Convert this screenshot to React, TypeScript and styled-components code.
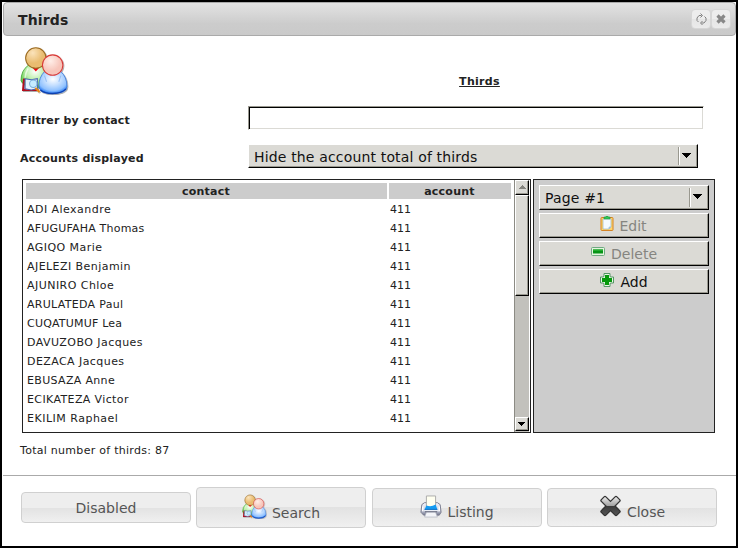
import React from "react";
import styled, { createGlobalStyle, css } from "styled-components";

const GlobalStyle = createGlobalStyle`
  * { box-sizing: border-box; }
  body {
    margin: 0;
    background: #fff;
    color: #222;
    font: 11px "DejaVu Sans", Verdana, sans-serif;
  }
`;

const raised = css`
  border: 1px solid;
  border-color: #fff #000 #000 #fff;
  background: #dbdad5;
  box-shadow: inset -1px -1px 0 #99988f;
`;

const Frame = styled.main`
  width: 738px;
  height: 548px;
  border: 2px solid #000;
  overflow: hidden;
  display: flex;
  flex-direction: column;
`;

const TitleBar = styled.header`
  display: flex;
  align-items: center;
  height: 34px;
  margin-left: 1px;
  padding: 0 4px 0 14px;
  border: 1px solid #aaa;
  border-radius: 4px;
  background: linear-gradient(#e3e3e3, #cccccc 65%, #cacaca);
`;

const Title = styled.h1`
  flex: 1;
  margin: 2px 0 0;
  font-size: 14px;
  line-height: 18px;
  letter-spacing: 0.15px;
`;

const TitleButton = styled.button`
  width: 20px;
  height: 20px;
  padding: 0;
  border: 1px solid #d6d6d6;
  border-radius: 4px;
  background: linear-gradient(#ededed 50%, #e5e5e5 50%, #ebebeb);
  display: grid;
  place-items: center;
`;

const Content = styled.section`
  height: 439px;
  padding: 10px 0 0 18px;
`;

const Heading = styled.div`
  display: grid;
  grid-template-columns: 228px 463px;
  height: 60px;
`;

const PageTitle = styled.h2`
  margin: 29px 0 0;
  font-size: 11px;
  line-height: 14px;
  letter-spacing: 0.3px;
  text-align: center;
  text-decoration: underline;
`;

const Field = styled.label<{ $height: number }>`
  display: grid;
  grid-template-columns: 228px 1fr;
  align-items: start;
  height: ${(p) => p.$height}px;
`;

const FieldName = styled.span<{ $tracking: number }>`
  padding-top: 8px;
  font-weight: bold;
  line-height: 14px;
  letter-spacing: ${(p) => p.$tracking}px;
`;

const TextInput = styled.input`
  width: 456px;
  height: 24px;
  border: 1px solid;
  border-color: #99988f #fff #fff #99988f;
  box-shadow: inset 1px 1px 0 #000, inset -1px -1px 0 #dbdad5;
  background: #fff;
  outline: none;
`;

const SelectBox = styled.div<{ $width: number; $height: number }>`
  ${raised}
  display: flex;
  width: ${(p) => p.$width}px;
  height: ${(p) => p.$height}px;
  padding: 2px 2px 2px 5px;
  color: #111;
  font-size: 14px;
  line-height: ${(p) => p.$height - 3}px;
  letter-spacing: 0.16px;
  white-space: nowrap;
`;

const SelectText = styled.span<{ $top: number }>`
  flex: 1;
  margin-top: ${(p) => p.$top}px;
`;

const SelectArrow = styled.span`
  width: 17px;
  border-left: 1px solid #99988f;
  box-shadow: inset 1px 0 0 #fff;
  padding: 6px 0 0 3px;
  line-height: 0;
`;

const Panels = styled.div`
  display: flex;
  gap: 2px;
  margin: -3px 0 0 2px;
`;

const ListPanel = styled.div`
  display: flex;
  width: 509px;
  height: 254px;
  border: 1px solid #222;
  overflow: hidden;
`;

const Table = styled.div`
  flex: 1;
  padding: 3px 3px 0;
`;

const Row = styled.div`
  display: grid;
  grid-template-columns: 361px 122px;
  gap: 2px;
  height: 17px;
  margin-bottom: 2px;
  line-height: 17px;
  padding-top: 1px;
`;

const HeadRow = styled(Row)`
  height: 15px;
  padding: 0;
`;

const HeadCell = styled.div`
  background: #ccc;
  font-weight: bold;
  line-height: 15px;
  letter-spacing: 0.25px;
  padding: 1px 1px 0 0;
  text-align: center;
`;

const Cell = styled.div<{ $tracking?: number }>`
  padding-left: 1px;
  letter-spacing: ${(p) => p.$tracking ?? 0}px;
  white-space: nowrap;
`;

const ScrollBar = styled.div`
  display: flex;
  flex-direction: column;
  width: 15px;
  margin-right: 1px;
  height: 252px;
  border-left: 1px solid #8c8b84;
  background: #c2c1bc;
  padding-bottom: 1px;
`;

const ScrollPart = styled.div<{ $height: number; $last?: boolean }>`
  ${raised}
  height: ${(p) => p.$height}px;
  margin-top: ${(p) => (p.$last ? "auto" : "0")};
  display: grid;
  place-items: center;
  line-height: 0;
`;

const ActionPanel = styled.div`
  width: 182px;
  height: 254px;
  padding: 5px;
  border: 1px solid #222;
  background: #ccc;
  display: flex;
  flex-direction: column;
  gap: 3px;
`;

const ActionButton = styled.button`
  ${raised}
  display: flex;
  justify-content: center;
  width: 170px;
  height: 25px;
  padding: 0 1px 0 0;
  color: #111;
  font: 14px/25px "DejaVu Sans", Verdana, sans-serif;
  gap: 5px;
  &:disabled { color: #858580; }
  svg { margin-top: 2px; }
`;

const Total = styled.p`
  margin: 11px 0 0;
  line-height: 14px;
  letter-spacing: 0.28px;
`;

const Footer = styled.footer`
  display: flex;
  align-items: flex-start;
  margin-left: 1px;
  padding: 11px 0 0 18px;
  border-top: 1px solid #aaa;
  gap: 5px;
`;

const FooterButton = styled.button<{ $height: number; $top: number; $text: number; $shift?: number }>`
  display: flex;
  justify-content: center;
  width: 170px;
  height: ${(p) => p.$height}px;
  margin: ${(p) => p.$top}px 0 0 ${(p) => p.$shift ?? 0}px;
  padding: 0;
  border: 1px solid #d0d0d0;
  border-radius: 4px;
  background: linear-gradient(#eeeeee 0 50%, #e2e2e2 50%, #f0f0f0);
  color: #555;
  font: 14px/18px "DejaVu Sans", Verdana, sans-serif;
  gap: 5px;
  span { margin-top: ${(p) => p.$text}px; }
  svg { margin-top: 6px; }
`;

const Arrow = ({ up = false }: { up?: boolean }) => (
  <svg width="9" height="6" viewBox="0 0 9 6" shapeRendering="crispEdges">
    {up ? <path d="M4 0h1v1h1v1h1v1h1v1H1V3h1V2h1V1h1z" fill="#85847e" /> : <path d="M0 0h9v1H8v1H7v1H6v1H5v1H4V4H3V3H2V2H1V1H0z" fill="#000" />}
  </svg>
);

const SmallArrow = () => (
  <svg width="8" height="4" viewBox="0 0 8 4" shapeRendering="crispEdges">
    <path d="M0 0h7v1H6v1H5v1H4v1H3V3H2V2H1V1H0z" fill="#000" />
  </svg>
);

const People = ({ size, id }: { size: number; id: string }) => (
  <svg width={size} height={size} viewBox="0 -1 48 48">
    <defs>
      <radialGradient id={id + "tan"} cx=".35" cy=".25"><stop stopColor="#fbe3bb" /><stop offset="1" stopColor="#e9bc70" /></radialGradient>
      <radialGradient id={id + "pink"} cx=".4" cy=".3"><stop stopColor="#ffeee8" /><stop offset="1" stopColor="#f7c5ba" /></radialGradient>
      <radialGradient id={id + "green"} cx=".55" cy=".3" r=".7"><stop stopColor="#ffffff" /><stop offset=".5" stopColor="#bdf0ad" /><stop offset="1" stopColor="#4fc236" /></radialGradient>
      <radialGradient id={id + "blue"} cx=".5" cy=".35" r=".65"><stop stopColor="#ffffff" /><stop offset=".45" stopColor="#c3deff" /><stop offset=".8" stopColor="#8fc1ff" /><stop offset="1" stopColor="#2b7df5" /></radialGradient>
      <filter id={id + "shade"} x="-20%" y="-20%" width="150%" height="150%"><feDropShadow dx=".8" dy=".8" stdDeviation=".6" floodOpacity=".4" /></filter>
    </defs>
    <g filter={`url(#${id}shade)`}>
      <path d="M8 18Q1 23 1 33q2 5 10 6l15 1V20l-5-3z" fill={`url(#${id}green)`} stroke="#3fa532" strokeWidth=".8" />
      <path d="M8 21q-3 5-3 9" fill="none" stroke="#fff" strokeWidth="1.5" opacity=".6" />
      <path d="M12 20h7l-3.5 4z" fill="#f60012" />
      <circle cx="15.5" cy="10.8" r="10" fill={`url(#${id}tan)`} stroke="#9b6a20" />
      <path d="M4 31l-1 11h15" fill="none" stroke="#b30c1c" strokeWidth="2" />
      <path d="M5 31l6 1 6-1v10l-6 1-6-1z" fill="#e2f2fd" stroke="#4a63ae" />
      <circle cx="13" cy="36" r="3.6" fill="#c6ecff" stroke="#7ab0dc" />
      <path d="M15 40l4 4" stroke="#e78712" strokeWidth="2" />
    </g>
    <g filter={`url(#${id}shade)`}>
      <path d="M24 24q-5.500 6-5.500 14 0 7.500 13.500 7.500 14 0 14-7 0-9-6-14.500z" fill={`url(#${id}blue)`} stroke="#3c7ad8" strokeWidth=".8" />
      <path d="M20 42q4 3.500 12 3.500 9 0 13-4.500" fill="none" stroke="#0d3fae" strokeWidth="1.300" />
      <path d="M24 28l2 6m14-6-2 6" fill="none" stroke="#80b1f2" strokeWidth="1" opacity=".7" />
      <circle cx="32" cy="17.700" r="10" fill={`url(#${id}pink)`} stroke="#d93a38" />
    </g>
  </svg>
);

const ClipboardIcon = () => (
  <svg width="14" height="16" viewBox="0 0 14 16">
    <rect x="1" y="1.5" width="12" height="13" rx=".7" fill="#ffd46c" stroke="#d48325" />
    <path d="M3 3h8v8l-2 2H3z" fill="#f4faff" stroke="#8aa7bd" strokeWidth=".6" />
    <path d="M9 13v-2h2" fill="#b9d8f0" stroke="#78a9ca" strokeWidth=".5" />
    <path d="M4 1h2V0h2v1h2v2H4z" fill="#34c759" stroke="#168d37" strokeWidth=".5" />
  </svg>
);

const MinusIcon = () => (
  <svg width="16" height="16" viewBox="0 0 16 16">
    <rect x="1.5" y="3.5" width="13" height="8" rx="1" fill="#e4f5df" stroke="#70a981" />
    <path d="M3 5.5h10v4H3z" fill="#069416" /><path d="M3 5.5h10V7H3z" fill="#22ad2d" />
  </svg>
);

const PlusIcon = () => (
  <svg width="16" height="16" viewBox="0 0 16 16">
    <path d="M5 1.500h6v3l1 .5h2.500v6H12l-1 .5v3H5v-3l-1-.5H1.500V5H4l1-.5z" fill="#eaf8e5" stroke="#559566" />
    <path d="M6 3h4v3h3v4h-3v3H6v-3H3V6h3z" fill="#07990d" />
  </svg>
);

const PrinterIcon = () => (
  <svg width="22" height="23" viewBox="0 0 24 24" preserveAspectRatio="none">
    <defs><linearGradient id="tray" x2="0" y2="1"><stop stopColor="#f6f7fd" /><stop offset=".6" stopColor="#c9cddd" /><stop offset="1" stopColor="#73778e" /></linearGradient></defs>
    <path d="M5 8L2 10 1 18l3 3h17l2-3-1-8-3-2z" fill="url(#tray)" stroke="#777a8c" />
    <path d="M4 17l3-6h10l4 6z" fill="#e9edf5" />
    <path d="M7 1h10v12H7z" fill="#fffff0" stroke="#aaa" />
    <path d="M7 11q5 2 10-1l2 5H5z" fill="#149bf2" /><path d="M5 15h14" stroke="#066bc1" />
    <path d="M5 17h14l-2 2H7z" fill="#5d6073" /><path d="M7 18h10l2 5H5z" fill="#f3f4f8" stroke="#aaaebb" strokeWidth=".7" />
    <path d="M3 12v5m18-5v5" stroke="#fff" strokeWidth="1.5" />
  </svg>
);

const CloseIcon = () => (
  <svg width="23" height="22" viewBox="0 0 24 24">
    <defs><linearGradient id="cross" x2="0" y2="1"><stop stopColor="#efefef" /><stop offset=".48" stopColor="#a2a2a2" /><stop offset=".52" stopColor="#3c3c3c" /><stop offset="1" stopColor="#555" /></linearGradient></defs>
    <path d="M5 2L2 5q-1 1 0 2l5 5-5 5q-1 1 0 2l3 3q1 1 2 0l5-5 5 5q1 1 2 0l3-3q1-1 0-2l-5-5 5-5q1-1 0-2l-3-3q-1-1-2 0l-5 5-5-5q-1-1-2 0z" fill="url(#cross)" stroke="#333" strokeWidth="1.4" />
  </svg>
);

const rows: { name: string; tracking: number }[] = [
  { name: "ADI Alexandre", tracking: 0.46 },
  { name: "AFUGUFAHA Thomas", tracking: 0.2 },
  { name: "AGIQO Marie", tracking: 0.45 },
  { name: "AJELEZI Benjamin", tracking: 0.44 },
  { name: "AJUNIRO Chloe", tracking: 0.46 },
  { name: "ARULATEDA Paul", tracking: 0.3 },
  { name: "CUQATUMUF Lea", tracking: 0.2 },
  { name: "DAVUZOBO Jacques", tracking: 0.46 },
  { name: "DEZACA Jacques", tracking: 0.43 },
  { name: "EBUSAZA Anne", tracking: 0.33 },
  { name: "ECIKATEZA Victor", tracking: 0.38 },
  { name: "EKILIM Raphael", tracking: 0.5 },
];

export default function App() {
  return (
    <>
      <GlobalStyle />
      <Frame>
        <TitleBar>
          <Title>Thirds</Title>
          <TitleButton aria-label="Refresh">
            <svg width="12" height="12" viewBox="0 0 12 12" fill="none" stroke="#808080">
              <path d="M6.500 2.500H4L2 5v2.500L3.500 9M6.500 10H9l2-2.500V5L9.500 3.500M5.500 .5l2 2-2 2M7.500 8l-2 2 2 2" />
            </svg>
          </TitleButton>
          <TitleButton aria-label="Close">
            <svg width="12" height="12" viewBox="0 0 12 12"><path d="M2.5 2.5l7 7m0-7l-7 7" stroke="#888" strokeWidth="3.2" /></svg>
          </TitleButton>
        </TitleBar>
        <Content>
          <Heading><People size={49} id="main" /><PageTitle>Thirds</PageTitle></Heading>
          <Field $height={38}><FieldName $tracking={0.12}>Filtrer by contact</FieldName><TextInput /></Field>
          <Field $height={38}>
            <FieldName $tracking={0.22}>Accounts displayed</FieldName>
            <SelectBox $width={450} $height={24}><SelectText $top={0}>Hide the account total of thirds</SelectText><SelectArrow><Arrow /></SelectArrow></SelectBox>
          </Field>
          <Panels>
            <ListPanel>
              <Table>
                <HeadRow><HeadCell>contact</HeadCell><HeadCell>account</HeadCell></HeadRow>
                {rows.map((row) => <Row key={row.name}><Cell $tracking={row.tracking}>{row.name}</Cell><Cell>411</Cell></Row>)}
              </Table>
              <ScrollBar>
                <ScrollPart $height={15}><Arrow up /></ScrollPart>
                <ScrollPart $height={101} />
                <ScrollPart $height={14} $last><SmallArrow /></ScrollPart>
              </ScrollBar>
            </ListPanel>
            <ActionPanel>
              <SelectBox $width={170} $height={25}><SelectText $top={-1}>Page #1</SelectText><SelectArrow><Arrow /></SelectArrow></SelectBox>
              <ActionButton disabled><ClipboardIcon />Edit</ActionButton>
              <ActionButton disabled><MinusIcon />Delete</ActionButton>
              <ActionButton><PlusIcon />Add</ActionButton>
            </ActionPanel>
          </Panels>
          <Total>Total number of thirds: 87</Total>
        </Content>
        <Footer>
          <FooterButton $height={31} $top={5} $text={6}><span>Disabled</span></FooterButton>
          <FooterButton $height={41} $top={0} $text={16}><People size={25} id="search" /><span>Search</span></FooterButton>
          <FooterButton $height={39} $top={1} $text={14} $shift={1}><PrinterIcon /><span>Listing</span></FooterButton>
          <FooterButton $height={39} $top={1} $text={14}><CloseIcon /><span>Close</span></FooterButton>
        </Footer>
      </Frame>
    </>
  );
}
